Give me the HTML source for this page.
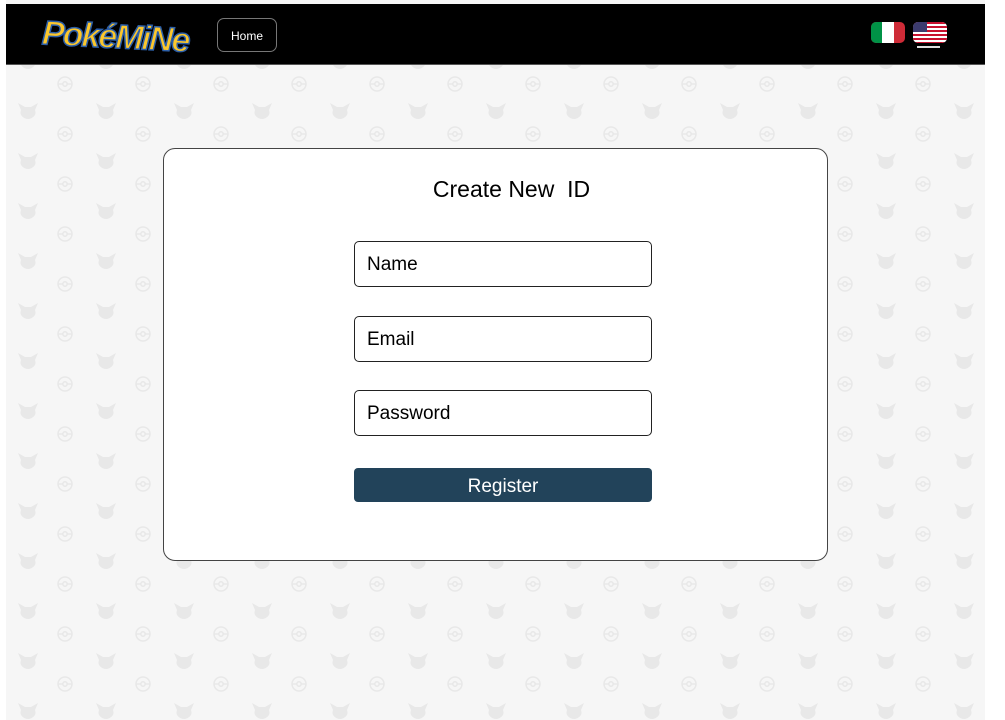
<!DOCTYPE html>
<html><head><style>
body{margin:0;width:1005px;height:720px;background:#fff;font-family:"Liberation Sans",sans-serif;position:relative;overflow:hidden}
.bg{position:absolute;left:6px;top:0;width:979px;height:720px;background:#f6f6f6}
.hdr{position:absolute;left:6px;top:4px;width:979px;height:60px;background:#000;border-bottom:1px solid #555}
.logo{position:absolute;left:36px;top:14px;font-size:34px;font-weight:bold;font-style:italic;color:#fcc72c;-webkit-text-stroke:1.5px #2b5ea8;letter-spacing:-2px;transform:rotate(3deg)}
.home{position:absolute;left:211px;top:14px;width:60px;height:34px;border:1px solid #777;border-radius:7px;color:#fff;font-size:12px;text-align:center;line-height:34px;box-sizing:border-box}
.card{position:absolute;left:163px;top:148px;width:665px;height:413px;background:#fff;border:1px solid #444;border-radius:12px;box-sizing:border-box}
h1{position:absolute;left:0;right:0;top:176px;margin:0;text-align:center;font-weight:normal;font-size:23px;padding-left:18px}
.in{position:absolute;left:354px;width:298px;height:46px;border:1.5px solid #222;border-radius:5px;box-sizing:border-box;font-size:19px;line-height:46px;padding-left:12px;background:#fff}
.btn{position:absolute;left:354px;top:468px;width:298px;height:34px;background:#22435a;border-radius:4px;color:#fff;font-size:19px;text-align:center;line-height:37px}
</style></head><body>
<div class="bg"></div>
<svg style="position:absolute;left:0;top:0" width="985" height="720">
<defs><pattern id="p" x="0" y="60" width="78" height="50" patternUnits="userSpaceOnUse">
<g fill="none" stroke="#e8e8e8" stroke-width="1.5"><circle cx="65" cy="24" r="7"/><line x1="58" y1="24" x2="72" y2="24"/><circle cx="65" cy="24" r="2.2" fill="#f6f6f6"/></g>
<g id="k" fill="#e8e8e8"><path d="M18 43 L25 47 L31 47 L38 43 L35 50 Q36 53 35 55 Q32 59 28 59 Q24 59 21 55 Q20 53 21 50 Z"/></g>
<use href="#k" y="-50"/>
</pattern></defs>
<rect x="6" y="64" width="979" height="656" fill="url(#p)"/>
</svg>
<div class="hdr">
<div class="logo">PokéMiNe</div>
<div class="home">Home</div>
<svg style="position:absolute;left:865px;top:18px" width="80" height="30">
<rect x="0" y="0" width="34" height="21" rx="5" fill="#ce2b37"/>
<rect x="6" y="0" width="5" height="21" fill="#009246"/><rect x="0" y="0" width="10" height="21" rx="5" fill="#009246"/>
<rect x="11" y="0" width="12" height="21" fill="#fff"/>
<clipPath id="c"><rect x="42" y="0" width="34" height="21" rx="5"/></clipPath>
<g clip-path="url(#c)"><rect x="42" y="0" width="34" height="21" fill="#fff"/>
<g fill="#c8102e"><rect x="42" y="0" width="34" height="2"/><rect x="42" y="4" width="34" height="2"/><rect x="42" y="8" width="34" height="2"/><rect x="42" y="12" width="34" height="2"/><rect x="42" y="16" width="34" height="2"/><rect x="42" y="20" width="34" height="1"/></g>
<rect x="42" y="0" width="14" height="10" fill="#3c3b6e"/></g>
<rect x="46" y="24" width="23" height="2" fill="#ddd"/>
</svg>
</div>
<div class="card"></div>
<h1>Create New&nbsp; ID</h1>
<div class="in" style="top:241px">Name</div>
<div class="in" style="top:316px">Email</div>
<div class="in" style="top:390px">Password</div>
<div class="btn">Register</div>
</body></html>
